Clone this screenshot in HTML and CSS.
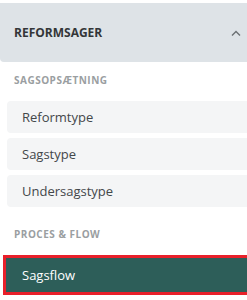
FILE: index.html
```html
<!DOCTYPE html>
<html lang="da">
<head>
    <meta charset="UTF-8">
    <title>Reformsager</title>
    <link rel="stylesheet" href="styles.css">
</head>
<body>
    <div class="sidebar">
        <div class="group-header">
            <span>REFORMSAGER</span>
            <svg class="chevron" width="10" height="6" viewBox="0 0 10 6">
                <path d="M1 5.5 L5 1.5 L9 5.5" fill="none" stroke="#6b6f73" stroke-width="1.4"/>
            </svg>
        </div>

        <div class="section-label">SAGSOPSÆTNING</div>
        <div class="menu">
            <a class="menu-item" href="#">Reformtype</a>
            <a class="menu-item" href="#">Sagstype</a>
            <a class="menu-item" href="#">Undersagstype</a>
        </div>

        <div class="section-label">PROCES &amp; FLOW</div>
        <div class="highlight">
            <a class="menu-item active" href="#">Sagsflow</a>
        </div>
    </div>
</body>
</html>
```

FILE: styles.css
```css
body {
    margin: 0;
    font-family: "Open Sans", "Noto Sans", sans-serif;
    background: white;
    color: #3d4144;
}
.sidebar {
    padding-top: 3px;
}
.group-header {
    display: flex;
    align-items: center;
    justify-content: space-between;
    height: 59px;
    padding: 0 6px 0 14px;
    background: #dee3e7;
    border-radius: 0 0 0 4px;
    font-size: 12px;
    font-weight: 700;
    color: #333638;
}
.chevron {
    display: block;
}
.section-label {
    padding: 11px 14px 14px;
    font-size: 10px;
    line-height: 14px;
    font-weight: 700;
    letter-spacing: 0.5px;
    color: #9a9ea1;
}
.menu {
    display: flex;
    flex-direction: column;
    gap: 5px;
    padding-left: 7px;
    margin-bottom: 9px;
}
.menu-item {
    display: flex;
    align-items: center;
    height: 32px;
    padding-left: 15px;
    background: #f4f5f6;
    border-radius: 4px 0 0 4px;
    font-size: 13px;
    color: #43474a;
    text-decoration: none;
}
.highlight {
    margin-left: 3px;
    border: 3px solid #e8202a;
    border-right: none;
}
.menu-item.active {
    height: 34px;
    padding-left: 16px;
    border-radius: 0;
    background: #2d5e59;
    color: white;
}
```
